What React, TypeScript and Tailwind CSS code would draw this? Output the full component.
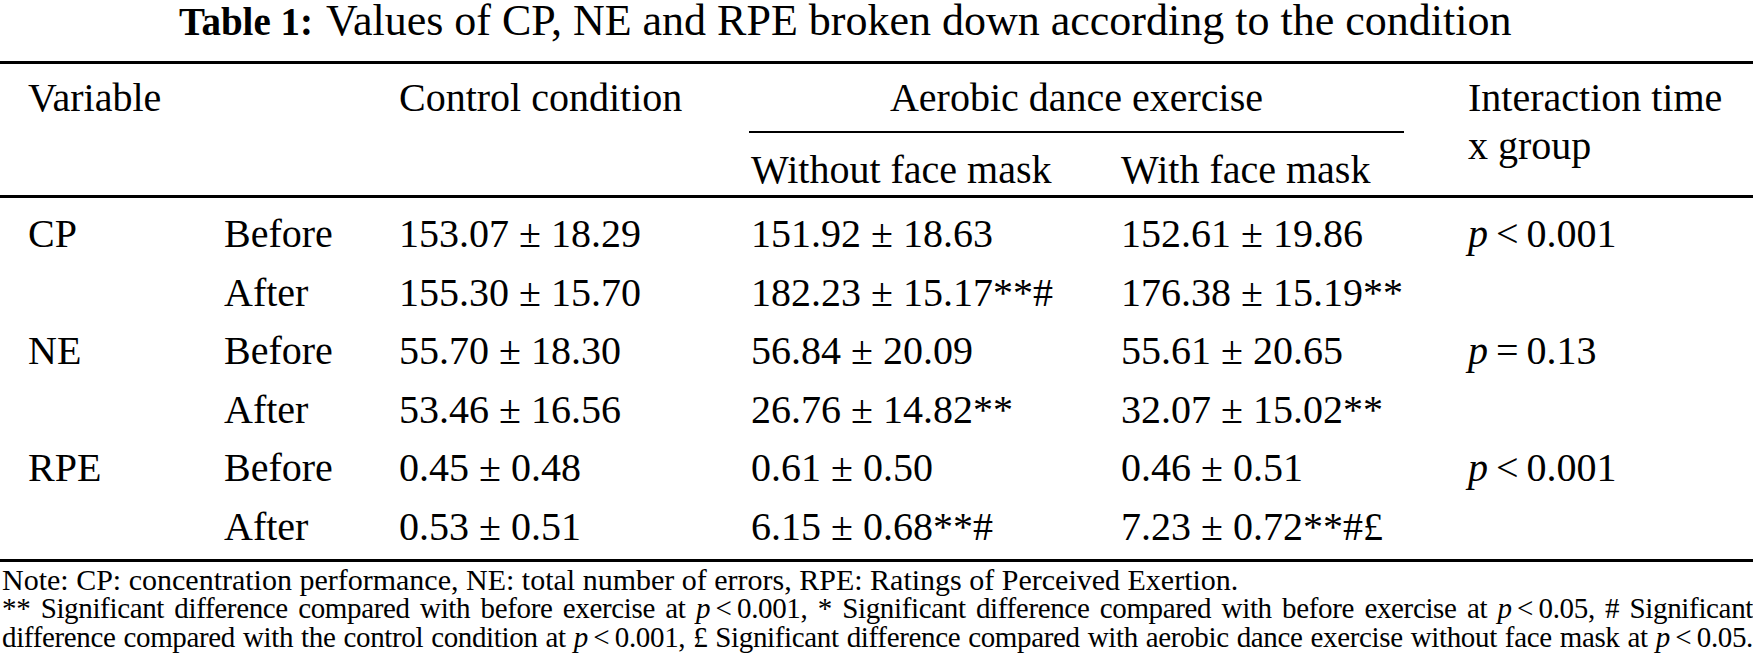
import React from "react";

type Row = {
  v: string;
  t: string;
  c: string;
  w: string;
  m: string;
  p?: [string, string];
};

const rows: Row[] = [
  { v: "CP", t: "Before", c: "153.07 ± 18.29", w: "151.92 ± 18.63", m: "152.61 ± 19.86", p: ["<", "0.001"] },
  { v: "", t: "After", c: "155.30 ± 15.70", w: "182.23 ± 15.17**#", m: "176.38 ± 15.19**" },
  { v: "NE", t: "Before", c: "55.70 ± 18.30", w: "56.84 ± 20.09", m: "55.61 ± 20.65", p: ["=", "0.13"] },
  { v: "", t: "After", c: "53.46 ± 16.56", w: "26.76 ± 14.82**", m: "32.07 ± 15.02**" },
  { v: "RPE", t: "Before", c: "0.45 ± 0.48", w: "0.61 ± 0.50", m: "0.46 ± 0.51", p: ["<", "0.001"] },
  { v: "", t: "After", c: "0.53 ± 0.51", w: "6.15 ± 0.68**#", m: "7.23 ± 0.72**#£" },
];

function P({ op, val }: { op: string; val: string }) {
  return (
    <span>
      <i>p</i>
      {"\u2009" + op + "\u2009" + val}
    </span>
  );
}

export default function App() {
  return (
    <div className="w-[1753px] h-[663px] bg-white text-black overflow-hidden font-['Liberation_Serif','Times_New_Roman',serif]">
      {/* Title */}
      <div className="h-[42px] pl-[179px] text-[44px] leading-[42px] whitespace-nowrap">
        <span className="font-bold text-[39px]">Table 1:</span>
        <span className="pl-[13px]">Values of CP, NE and RPE broken down according to the condition</span>
      </div>

      {/* Top rule */}
      <div className="mt-[19px] h-[3px] bg-black" />

      {/* Header */}
      <div className="grid grid-cols-[224px_175px_352px_370px_347px_1fr] grid-rows-[48px_auto_48px] pt-[10px] text-[40px] whitespace-nowrap">
        <div className="col-start-1 row-start-1 pl-[28px] leading-[48px]">Variable</div>
        <div className="col-start-3 row-start-1 leading-[48px]">Control condition</div>
        <div className="col-start-4 col-span-2 row-start-1 flex flex-col">
          <div className="w-[655px] -ml-[2px] text-center leading-[48px]">Aerobic dance exercise</div>
        </div>
        <div className="col-start-4 col-span-2 row-start-2 pt-[9px] pb-[13px]">
          <div className="w-[655px] -ml-[2px] h-[2px] bg-black" />
        </div>
        <div className="col-start-4 row-start-3 leading-[48px]">Without face mask</div>
        <div className="col-start-5 row-start-3 leading-[48px]">With face mask</div>
        <div className="col-start-6 row-start-1 row-span-3 leading-[48px]">
          <div>Interaction time</div>
          <div>x group</div>
        </div>
      </div>

      {/* Header bottom rule */}
      <div className="mt-[1px] h-[3px] bg-black" />

      {/* Body */}
      <div className="pt-[7px] pb-[2px] text-[40px] whitespace-nowrap">
        {rows.map((r, i) => (
          <div
            key={i}
            className="grid grid-cols-[224px_175px_352px_370px_347px_1fr] h-[58.6px] leading-[58.6px]"
          >
            <div className="pl-[28px]">{r.v}</div>
            <div>{r.t}</div>
            <div>{r.c}</div>
            <div>{r.w}</div>
            <div>{r.m}</div>
            <div>{r.p ? <P op={r.p[0]} val={r.p[1]} /> : null}</div>
          </div>
        ))}
      </div>

      {/* Bottom rule */}
      <div className="h-[3px] bg-black" />

      {/* Notes */}
      <div className="pt-[3px] pl-[2px] leading-[29px]">
        <div className="whitespace-nowrap text-[30px]">
          Note: CP: concentration performance, NE: total number of errors, RPE: Ratings of Perceived Exertion.
        </div>
        <div className="text-[29px] tracking-[-0.35px] text-justify [text-align-last:justify]">
          ** Significant difference compared with before exercise at <i>p</i>
          {"\u2009<\u20090.001, * Significant difference compared with before exercise at "}
          <i>p</i>
          {"\u2009<\u20090.05, # Significant"}
        </div>
        <div className="text-[29px] tracking-[-0.35px] text-justify [text-align-last:justify]">
          difference compared with the control condition at <i>p</i>
          {"\u2009<\u20090.001, £ Significant difference compared with aerobic dance exercise without face mask at "}
          <i>p</i>
          {"\u2009<\u20090.05."}
        </div>
      </div>
    </div>
  );
}
